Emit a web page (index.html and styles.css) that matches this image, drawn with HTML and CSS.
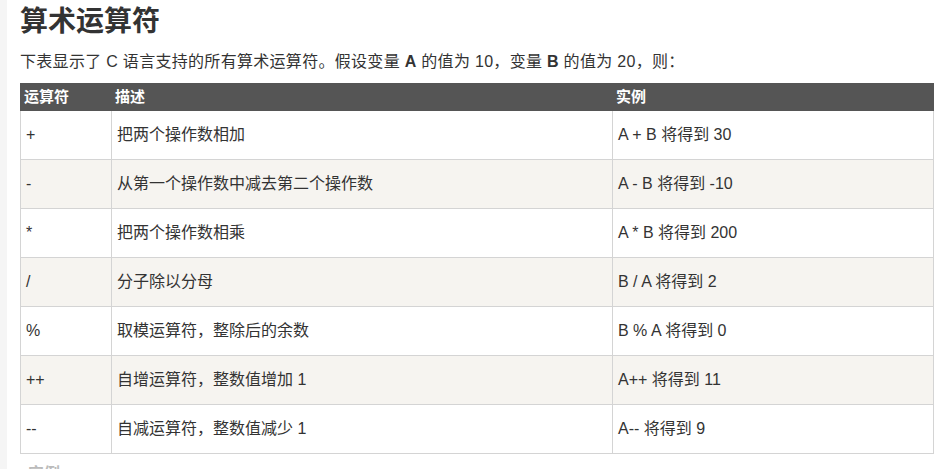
FILE: index.html
```html
<!DOCTYPE html>
<html lang="zh-CN">
<head>
<meta charset="utf-8">
<title>算术运算符</title>
<link rel="stylesheet" href="styles.css">
</head>
<body>
<div class="page">
  <div class="side-strip"></div>
  <main class="content">
    <h1 class="title">算术运算符</h1>
    <p class="intro">下表显示了 C 语言支持的所有算术运算符。假设变量 <b>A</b> 的值为 10，变量 <b>B</b> 的值为 20，则：</p>
    <table class="reference">
      <colgroup>
        <col class="c1"><col class="c2"><col class="c3">
      </colgroup>
      <thead>
        <tr><th>运算符</th><th>描述</th><th>实例</th></tr>
      </thead>
      <tbody>
        <tr><td>+</td><td>把两个操作数相加</td><td>A + B 将得到 30</td></tr>
        <tr><td>-</td><td>从第一个操作数中减去第二个操作数</td><td>A - B 将得到 -10</td></tr>
        <tr><td>*</td><td>把两个操作数相乘</td><td>A * B 将得到 200</td></tr>
        <tr><td>/</td><td>分子除以分母</td><td>B / A 将得到 2</td></tr>
        <tr><td>%</td><td>取模运算符，整除后的余数</td><td>B % A 将得到 0</td></tr>
        <tr><td>++</td><td>自增运算符，整数值增加 1</td><td>A++ 将得到 11</td></tr>
        <tr><td>--</td><td>自减运算符，整数值减少 1</td><td>A-- 将得到 9</td></tr>
      </tbody>
    </table>
    <p class="next">实例</p>
  </main>
</div>
</body>
</html>
```

FILE: styles.css
```css
html, body {
  margin: 0;
  padding: 0;
  background: #ffffff;
}
body {
  font-family: "Liberation Sans", "Noto Sans CJK SC", sans-serif;
  color: #333333;
  overflow: hidden;
}
.page {
  display: flex;
  min-height: 469px;
}
.side-strip {
  width: 7px;
  flex: 0 0 7px;
  background: #f5f5f5;
}
.content {
  flex: 1;
  padding: 0 2px 0 13px;
}
.title {
  margin: 5px 0 0 0;
  font-size: 28px;
  line-height: 34px;
  font-weight: bold;
  color: #333333;
}
.intro {
  margin: 11px 0 0 0;
  font-size: 16px;
  line-height: 24px;
  letter-spacing: 0.3px;
}
.intro b {
  font-weight: bold;
}
.reference {
  margin-top: 9px;
  border-collapse: collapse;
  table-layout: fixed;
  width: 913px;
}
.reference .c1 { width: 91px; }
.reference .c2 { width: 501px; }
.reference .c3 { width: 321px; }
.reference th {
  background: #555555;
  color: #ffffff;
  border: 1px solid #555555;
  font-size: 15px;
  font-weight: bold;
  line-height: 20px;
  padding: 3px 3px;
  text-align: left;
  vertical-align: top;
}
.reference td {
  border: 1px solid #d4d4d4;
  font-size: 16px;
  line-height: 32px;
  padding: 8px 5px;
  vertical-align: top;
  text-align: left;
}
.reference tbody tr:nth-child(odd) {
  background: #ffffff;
}
.reference tbody tr:nth-child(even) {
  background: #f6f4f0;
}
.next {
  margin: 8px 0 0 8px;
  font-size: 16px;
  line-height: 24px;
  font-weight: bold;
  color: #bbbbbb;
}
```
